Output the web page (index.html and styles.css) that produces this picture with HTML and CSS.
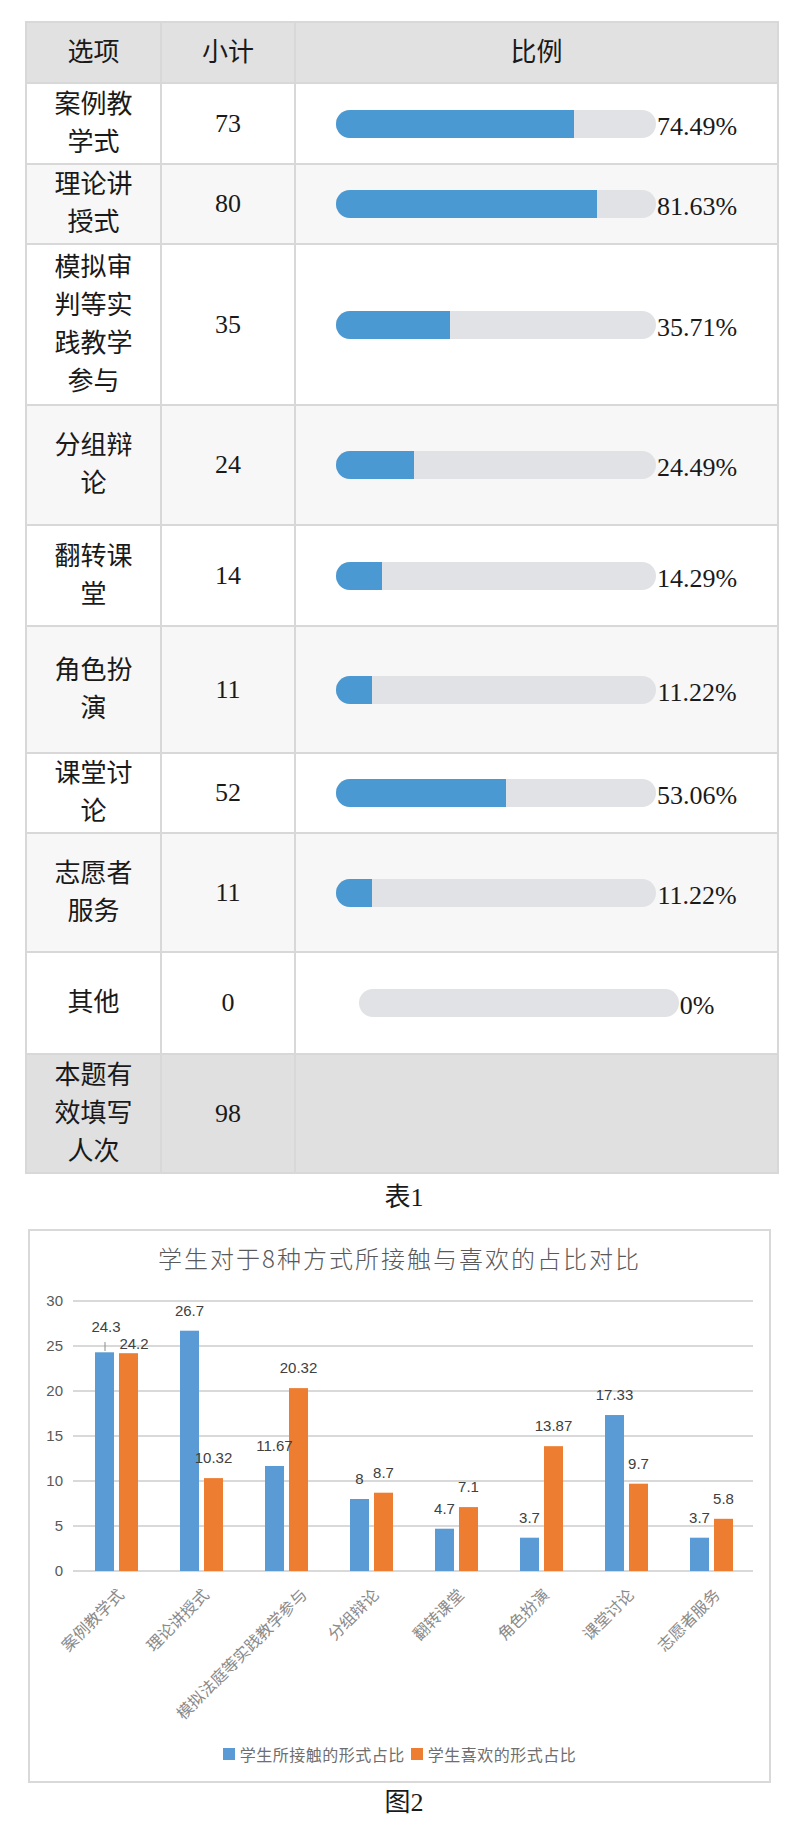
FILE: index.html
```html
<!DOCTYPE html>
<html lang="zh-CN">
<head>
<meta charset="utf-8">
<title>表1 · 图2</title>
<link rel="stylesheet" href="styles.css">
</head>
<body>
<main class="page">
  <table class="survey">
    <colgroup><col class="c-opt"><col class="c-cnt"><col class="c-ratio"></colgroup>
    <thead>
      <tr class="r-head"><th>选项</th><th>小计</th><th>比例</th></tr>
    </thead>
    <tbody>
      <tr class="r81"><td><div class="opt">案例教学式</div></td><td class="num">73</td><td><div class="ratio"><div class="track"><div class="fill" style="width:74.49%"></div></div><span class="pct">74.49%</span></div></td></tr>
      <tr class="r80"><td><div class="opt">理论讲授式</div></td><td class="num">80</td><td><div class="ratio"><div class="track"><div class="fill" style="width:81.63%"></div></div><span class="pct">81.63%</span></div></td></tr>
      <tr class="r161"><td><div class="opt">模拟审判等实践教学参与</div></td><td class="num">35</td><td><div class="ratio"><div class="track"><div class="fill" style="width:35.71%"></div></div><span class="pct">35.71%</span></div></td></tr>
      <tr class="r120"><td><div class="opt">分组辩论</div></td><td class="num">24</td><td><div class="ratio"><div class="track"><div class="fill" style="width:24.49%"></div></div><span class="pct">24.49%</span></div></td></tr>
      <tr class="r101"><td><div class="opt">翻转课堂</div></td><td class="num">14</td><td><div class="ratio"><div class="track"><div class="fill" style="width:14.29%"></div></div><span class="pct">14.29%</span></div></td></tr>
      <tr class="r127"><td><div class="opt">角色扮演</div></td><td class="num">11</td><td><div class="ratio"><div class="track"><div class="fill" style="width:11.22%"></div></div><span class="pct">11.22%</span></div></td></tr>
      <tr class="r80"><td><div class="opt">课堂讨论</div></td><td class="num">52</td><td><div class="ratio"><div class="track"><div class="fill" style="width:53.06%"></div></div><span class="pct">53.06%</span></div></td></tr>
      <tr class="r119"><td><div class="opt">志愿者服务</div></td><td class="num">11</td><td><div class="ratio"><div class="track"><div class="fill" style="width:11.22%"></div></div><span class="pct">11.22%</span></div></td></tr>
      <tr class="r102"><td><div class="opt">其他</div></td><td class="num">0</td><td><div class="ratio"><div class="track track-empty"><div class="fill" style="width:0%"></div></div><span class="pct">0%</span></div></td></tr>
      <tr class="r119 total"><td><div class="opt">本题有效填写人次</div></td><td class="num">98</td><td></td></tr>
    </tbody>
  </table>
  <p class="caption cap-table">表1</p>

  <figure class="chart">
    <h2 class="chart-title">学生对于8种方式所接触与喜欢的占比对比</h2>
    <svg class="plot" width="739" height="462" viewBox="0 0 739 462">
      <g class="grid">
        <line x1="43" y1="27" x2="723" y2="27"/>
        <line x1="43" y1="72" x2="723" y2="72"/>
        <line x1="43" y1="117" x2="723" y2="117"/>
        <line x1="43" y1="162" x2="723" y2="162"/>
        <line x1="43" y1="207" x2="723" y2="207"/>
        <line x1="43" y1="252" x2="723" y2="252"/>
        <line x1="43" y1="297" x2="723" y2="297"/>
      </g>
      <g class="ytick">
        <text x="33" y="32">30</text>
        <text x="33" y="77">25</text>
        <text x="33" y="122">20</text>
        <text x="33" y="167">15</text>
        <text x="33" y="212">10</text>
        <text x="33" y="257">5</text>
        <text x="33" y="302">0</text>
      </g>
      <g class="bar-a">
        <rect x="65" y="78.3" width="19" height="218.7"/>
        <rect x="150" y="56.7" width="19" height="240.3"/>
        <rect x="235" y="191.97" width="19" height="105.03"/>
        <rect x="320" y="225" width="19" height="72"/>
        <rect x="405" y="254.7" width="19" height="42.3"/>
        <rect x="490" y="263.7" width="19" height="33.3"/>
        <rect x="575" y="141.03" width="19" height="155.97"/>
        <rect x="660" y="263.7" width="19" height="33.3"/>
      </g>
      <g class="bar-b">
        <rect x="89" y="79.2" width="19" height="217.8"/>
        <rect x="174" y="204.12" width="19" height="92.88"/>
        <rect x="259" y="114.12" width="19" height="182.88"/>
        <rect x="344" y="218.7" width="19" height="78.3"/>
        <rect x="429" y="233.1" width="19" height="63.9"/>
        <rect x="514" y="172.17" width="19" height="124.83"/>
        <rect x="599" y="209.7" width="19" height="87.3"/>
        <rect x="684" y="244.8" width="19" height="52.2"/>
      </g>
      <line class="leader" x1="75" y1="68" x2="75" y2="77"/>
      <g class="vlabel">
        <text x="76" y="58">24.3</text>
        <text x="104" y="75">24.2</text>
        <text x="159.5" y="41.7">26.7</text>
        <text x="183.5" y="189.1">10.32</text>
        <text x="244.5" y="177">11.67</text>
        <text x="268.5" y="99.1">20.32</text>
        <text x="329.5" y="210">8</text>
        <text x="353.5" y="203.7">8.7</text>
        <text x="414.5" y="239.7">4.7</text>
        <text x="438.5" y="218.1">7.1</text>
        <text x="499.5" y="248.7">3.7</text>
        <text x="523.5" y="157.2">13.87</text>
        <text x="584.5" y="126">17.33</text>
        <text x="608.5" y="194.7">9.7</text>
        <text x="669.5" y="248.7">3.7</text>
        <text x="693.5" y="229.8">5.8</text>
      </g>
      <g class="cat">
        <text transform="translate(95 322) rotate(-45)">案例教学式</text>
        <text transform="translate(180 322) rotate(-45)">理论讲授式</text>
        <text transform="translate(278 322) rotate(-45)">模拟法庭等实践教学参与</text>
        <text transform="translate(350 322) rotate(-45)">分组辩论</text>
        <text transform="translate(435 322) rotate(-45)">翻转课堂</text>
        <text transform="translate(520 322) rotate(-45)">角色扮演</text>
        <text transform="translate(605 322) rotate(-45)">课堂讨论</text>
        <text transform="translate(691 322) rotate(-45)">志愿者服务</text>
      </g>
    </svg>
    <div class="legend">
      <span class="key key-a"></span><span class="key-text">学生所接触的形式占比</span>
      <span class="key key-b"></span><span class="key-text">学生喜欢的形式占比</span>
    </div>
  </figure>
  <p class="caption cap-chart">图2</p>
</main>
</body>
</html>
```

FILE: styles.css
```css
* { box-sizing: border-box; }

html, body {
  margin: 0;
  padding: 0;
  background: #ffffff;
}

body {
  font-family: "Liberation Serif", "Noto Sans CJK SC", serif;
  color: #1a1a1a;
}

.page {
  width: 802px;
  padding-top: 21px;
}

/* ---------- table ---------- */
.survey {
  margin-left: 25px;
  width: 752px;
  border-collapse: collapse;
  table-layout: fixed;
  font-size: 26px;
  line-height: 38px;
}

.c-opt { width: 135px; }
.c-cnt { width: 134px; }
.c-ratio { width: 483px; }

.survey th,
.survey td {
  border: 2px solid #d8d8d8;
  padding: 0;
  text-align: center;
  vertical-align: middle;
  font-weight: 400;
}

.survey thead tr { background: #e1e1e1; }
.survey tbody tr { background: #ffffff; }
.survey tbody tr:nth-child(even) { background: #f7f7f7; }
.survey tbody tr.total { background: #e0e0e0; }

.r-head { height: 61px; }
.r80 { height: 80px; }
.r81 { height: 81px; }
.r101 { height: 101px; }
.r102 { height: 102px; }
.r119 { height: 119px; }
.r120 { height: 120px; }
.r127 { height: 127px; }
.r161 { height: 161px; }

.opt {
  width: 80px;
  margin: 0 auto;
}

.ratio {
  display: flex;
  justify-content: center;
  align-items: center;
}

.track {
  width: 320px;
  height: 28px;
  border-radius: 14px;
  background: #e1e2e5;
  overflow: hidden;
  flex: none;
}

.fill {
  height: 100%;
  background: #4a99d3;
}

.pct {
  margin-top: 6px;
  padding-left: 1px;
  white-space: nowrap;
}

/* ---------- captions ---------- */
.caption {
  margin: 0;
  text-align: center;
  font-size: 26px;
  line-height: 36px;
  padding-left: 6px;
}

.cap-table { margin-top: 6px; }
.cap-chart { margin-top: 2px; }

/* ---------- chart ---------- */
.chart {
  margin: 13px 0 0 28px;
  width: 743px;
  height: 554px;
  border: 2px solid #d9d9d9;
  background: #ffffff;
  padding: 11px 0 0;
}

.chart-title {
  margin: 0;
  height: 32px;
  text-align: center;
  font-family: "Noto Sans CJK SC", sans-serif;
  font-weight: 300;
  font-size: 24px;
  line-height: 32px;
  letter-spacing: 2px;
  color: #595959;
}

.plot {
  display: block;
}

.grid line {
  stroke: #d9d9d9;
  stroke-width: 2;
}

.ytick text {
  font-family: "Liberation Sans", sans-serif;
  font-size: 15px;
  fill: #595959;
  text-anchor: end;
}

.bar-a rect { fill: #5b9bd5; }
.bar-b rect { fill: #ed7d31; }

.leader {
  stroke: #8c8c8c;
  stroke-width: 1;
}

.vlabel text {
  font-family: "Liberation Sans", sans-serif;
  font-size: 15px;
  fill: #404040;
  text-anchor: middle;
}

.cat text {
  font-family: "Noto Sans CJK SC", sans-serif;
  font-size: 16px;
  fill: #8a8a8a;
  text-anchor: end;
}

.legend {
  display: flex;
  justify-content: center;
  align-items: center;
  height: 36px;
  font-family: "Noto Sans CJK SC", sans-serif;
  font-size: 16px;
  letter-spacing: 0.5px;
  color: #6e6e6e;
}

.key {
  width: 12px;
  height: 12px;
  margin-right: 5px;
  flex: none;
}

.key-a { background: #5b9bd5; }
.key-b { background: #ed7d31; margin-left: 6px; }
```
